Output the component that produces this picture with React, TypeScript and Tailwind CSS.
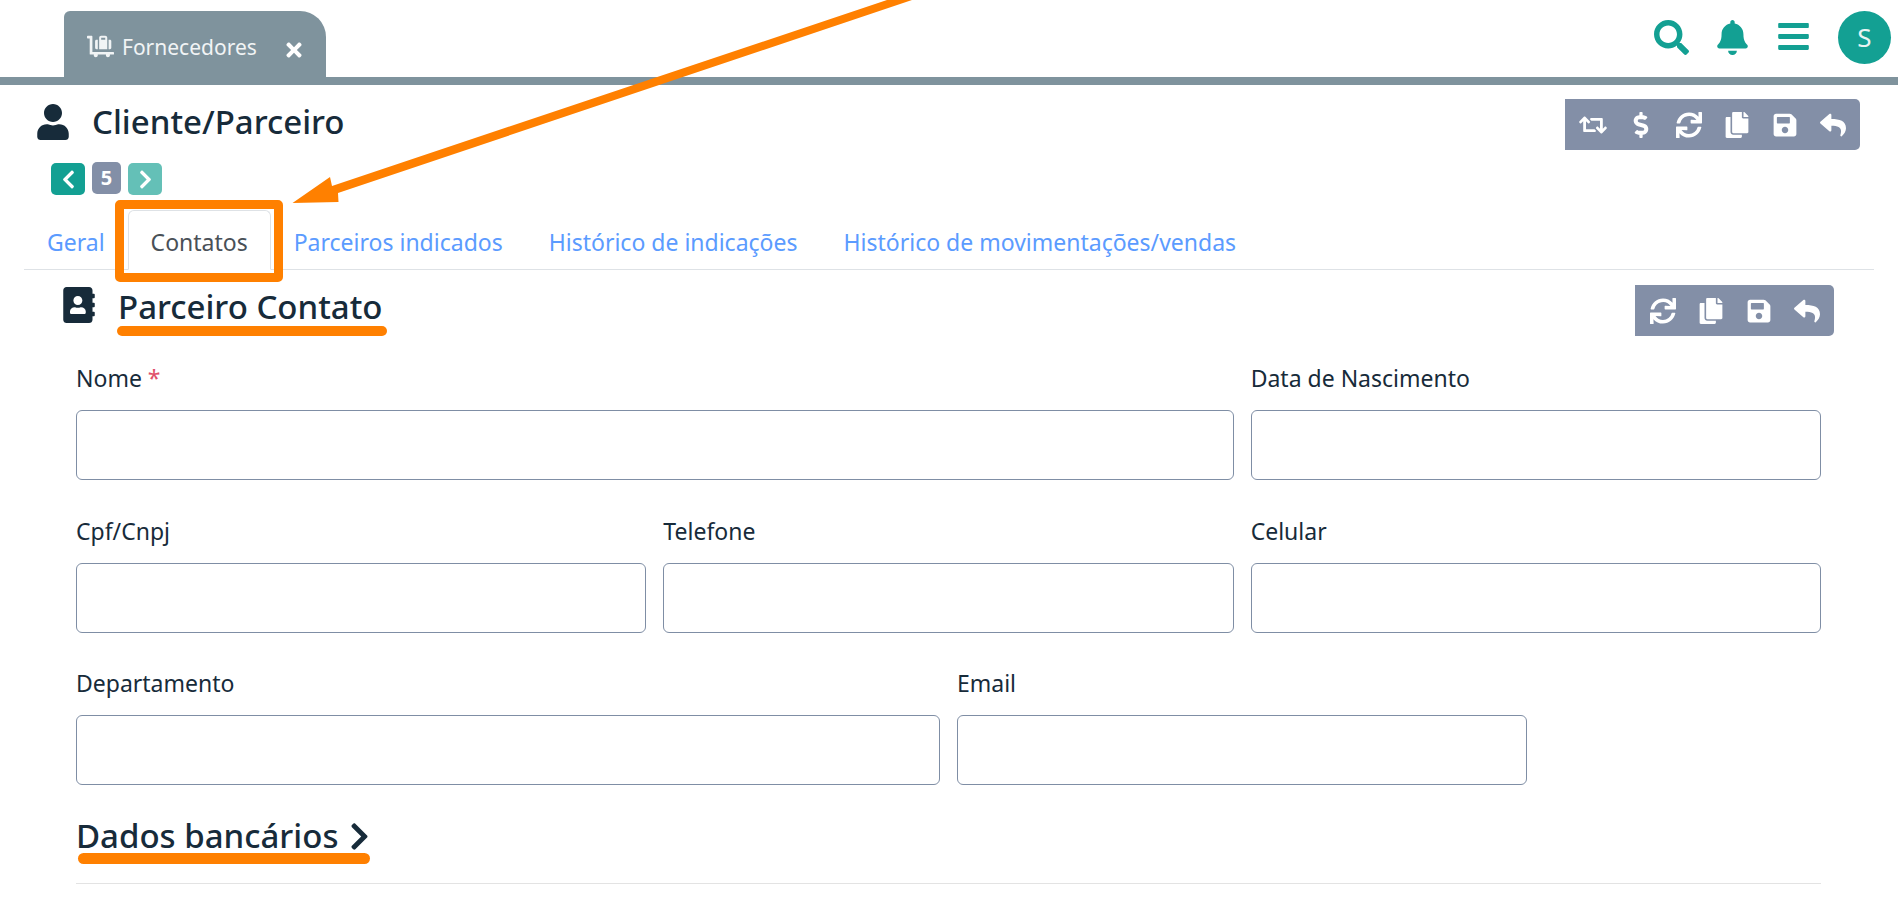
import React from "react";
import {
  FaSearch, FaBell, FaBars, FaUser, FaAddressBook, FaChevronLeft, FaChevronRight,
  FaLuggageCart, FaTimes, FaRetweet, FaDollarSign, FaSync, FaCopy, FaSave, FaReply,
} from "react-icons/fa";

function Toolbar({ icons }: { icons: React.ComponentType<{ className?: string }>[] }) {
  return (
    <div className="h-[51px] flex items-center gap-[20px] pl-[14px] pr-[13px] bg-[#838fa7] rounded-r-[5px] text-white">
      {icons.map((I, i) => (
        <span key={i} className="w-[28px] flex justify-center">
          <I className={I === FaRetweet ? "text-[34px]" : "text-[26px]"} />
        </span>
      ))}
    </div>
  );
}

function Field({ label, span, required }: { label: string; span: string; required?: boolean }) {
  return (
    <div className={span}>
      <div className="h-[30px] leading-[30px] text-[23px] text-[#172b3a]">
        {label}
        {required && <span className="text-[#e0506a]"> *</span>}
      </div>
      <div className="mt-[17px] h-[70px] border border-[#7f8ea5] rounded-[6px] bg-white" />
    </div>
  );
}

const tabs = ["Geral", "Contatos", "Parceiros indicados", "Histórico de indicações", "Histórico de movimentações/vendas"];

export default function App() {
  return (
    <div className="relative w-[1898px] h-[915px] overflow-hidden bg-white font-['Noto_Sans',sans-serif]">
      {/* top bar */}
      <header className="h-[85px] border-b-8 border-[#7f939d] flex items-end justify-between">
        <div className="ml-16 w-[262px] h-[66px] bg-[#7f939d] rounded-tl-[6px] rounded-tr-[26px] flex items-start pl-[23px] pt-[22px] text-[#f1f4f5]">
          <FaLuggageCart className="text-[27px]" />
          <span className="ml-[8px] text-[21px] leading-[28px]">Fornecedores</span>
          <FaTimes className="ml-[26px] mt-[6px] text-[22px] text-white" />
        </div>
        <div className="h-[77px] flex items-start text-[#13a093]">
          <FaSearch className="mt-[20px] text-[35px]" />
          <FaBell className="ml-[26px] mt-[20px] text-[35px]" />
          <FaBars className="ml-[26px] mt-[19px] text-[35px]" />
          <div className="ml-[27px] mr-[7px] mt-[11px] w-[53px] h-[53px] rounded-full bg-[#13a093] text-[#e8f4f3] text-[26px] flex items-center justify-center">
            S
          </div>
        </div>
      </header>

      {/* page title */}
      <div className="flex justify-between pl-[35px] pr-[38px] pt-[14px]">
        <div className="flex items-center h-[46px] text-[#172b3a]">
          <FaUser className="text-[36px]" />
          <h1 className="ml-[21px] text-[33px] font-medium leading-[46px]">Cliente/Parceiro</h1>
        </div>
        <Toolbar icons={[FaRetweet, FaDollarSign, FaSync, FaCopy, FaSave, FaReply]} />
      </div>

      {/* pager */}
      <div className="flex items-start pl-[51px] mt-[13px] text-white">
        <div className="w-[34px] h-[32px] bg-[#13a093] rounded-[5px] flex items-center justify-center"><FaChevronLeft className="text-[21px]" /></div>
        <div className="ml-[7px] -mt-[1px] w-[29px] h-[32px] bg-[#838fa7] rounded-[5px] flex items-center justify-center text-[20px] font-bold">5</div>
        <div className="ml-[7px] w-[34px] h-[32px] bg-[#64c0b7] rounded-[5px] flex items-center justify-center"><FaChevronRight className="text-[21px]" /></div>
      </div>

      {/* tabs */}
      <nav className="mt-[15px] ml-[24px] mr-[24px] h-[60px] border-b border-[#dee2e6] flex">
        {tabs.map((t, i) => (
          <div
            key={t}
            className={
              "h-[60px] px-[22px] text-[23px] leading-[62px] border rounded-t-[6px] " +
              (i === 1 ? "border-[#dee2e6] border-b-white bg-white text-[#495057]" : "border-transparent text-[#5b9bff]")
            }
          >
            {t}
          </div>
        ))}
      </nav>

      {/* contact section */}
      <section className="pl-[63px] pr-[64px]">
        <div className="flex justify-between pt-[15px]">
          <div className="flex items-center h-[44px] text-[#172b3a]">
            <FaAddressBook className="-ml-[2px] text-[36px] -mt-[5px]" />
            <h2 className="relative ml-[21px] text-[33px] font-medium leading-[44px]">
              Parceiro Contato
              <span className="absolute left-[-1px] right-[-4px] top-[41px] h-[10px] rounded-full bg-[#ff8000]" />
            </h2>
          </div>
          <Toolbar icons={[FaSync, FaCopy, FaSave, FaReply]} />
        </div>

        <div className="pl-[13px] pr-[13px] mt-[27px] grid grid-cols-12 gap-x-[17px] gap-y-[35.5px]">
          <Field label="Nome" required span="col-span-8" />
          <Field label="Data de Nascimento" span="col-span-4" />
          <Field label="Cpf/Cnpj" span="col-span-4" />
          <Field label="Telefone" span="col-span-4" />
          <Field label="Celular" span="col-span-4" />
          <Field label="Departamento" span="col-span-6" />
          <Field label="Email" span="col-span-4" />
        </div>

        <div className="ml-[13px] mr-[13px] mt-[29px] pb-[20px] border-b border-[#e3e3e3] h-[70px]">
          <h3 className="relative inline-flex items-center h-[44px] text-[33px] font-medium leading-[44px] text-[#172b3a]">
            Dados bancários
            <FaChevronRight className="ml-[6px] text-[31px]" />
            <span className="absolute left-[2px] right-[5px] top-[39px] h-[11px] rounded-full bg-[#ff8000]" />
          </h3>
        </div>
      </section>

      {/* annotation: box around the active tab */}
      <div className="absolute left-[115px] top-[200px] w-[168px] h-[82px] border-[9px] border-[#ff8000] rounded-[5px] pointer-events-none" />
      {/* annotation: arrow */}
      <svg className="absolute left-0 top-0 pointer-events-none" width="1000" height="220" viewBox="0 0 1000 220">
        <polygon fill="#ff8000" points="887,0 912,0 338,193 338.5,202 292.5,203 330,177 332,186" />
      </svg>
    </div>
  );
}
